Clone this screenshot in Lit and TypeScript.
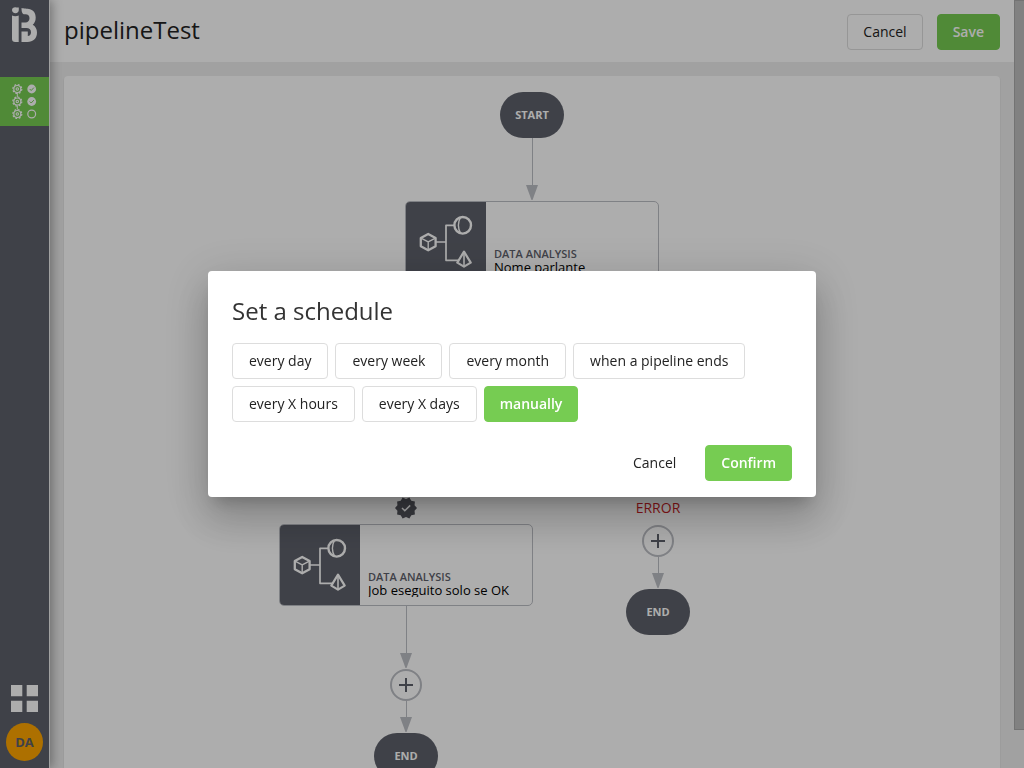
import { LitElement, html, css, svg } from "lit";
import { customElement, property, state } from "lit/decorators.js";
import { classMap } from "lit/directives/class-map.js";

const buttonStyles = css`
  button {
    height: 36px;
    padding: 0 15px;
    border: 1px solid #ddd;
    border-radius: 4px;
    background: #fff;
    color: #222;
    font: 400 14px/20px "Open Sans", sans-serif;
    white-space: nowrap;
    cursor: pointer;
  }
  button.primary {
    border-color: #76cc52;
    background: #76cc52;
    color: #fff;
    font-weight: 600;
  }
  button.plain {
    border-color: transparent;
    background: transparent;
  }
`;

@customElement("flow-arrow")
class FlowArrow extends LitElement {
  static styles = css`
    :host {
      display: flex;
      flex-direction: column;
      align-items: center;
    }
    .line {
      flex: 1;
      width: 1px;
      background: #bcbec4;
    }
    svg {
      display: block;
      fill: #bcbec4;
    }
  `;
  render() {
    return html`<div class="line"></div>
      <svg width="12" height="16" viewBox="0 0 12 16" aria-hidden="true"><path d="M0 0h12L6.500 15h-1z" /></svg>`;
  }
}

@customElement("job-card")
class JobCard extends LitElement {
  @property() kind = "";
  @property() name = "";
  static styles = css`
    :host {
      display: flex;
      box-sizing: border-box;
      width: 254px;
      height: 82px;
      border: 1px solid #bcbec4;
      border-radius: 5px;
      overflow: hidden;
      background: #fff;
    }
    .icon {
      flex: none;
      width: 80px;
      height: 80px;
      background: #5e616b;
    }
    .text {
      flex: 1;
      display: flex;
      flex-direction: column;
      justify-content: flex-end;
      padding: 0 8px 8px;
    }
    .kind {
      color: #5e616b;
      font: 600 11px/14px "Open Sans", sans-serif;
    }
    .name {
      overflow: hidden;
      color: #000;
      font: 400 13px/13px "Open Sans", sans-serif;
    }
  `;
  render() {
    return html`
      <svg class="icon" viewBox="0 0 80 80" fill="none" stroke="#fff" stroke-linejoin="round" aria-hidden="true">
        <path stroke-width="1.700" d="M30 40h10M48 23.300h-8v35h12" />
        <path stroke-width="2.300" d="M22.200 31.900l7.400 4.100v8.200l-7.400 4.100-7.400-4.100v-8.200z" />
        <path stroke-width="1.400" d="M15 36.200l7.200 3.600 7.200-3.600M22.200 39.800v8.400" />
        <circle stroke-width="2.400" cx="56.700" cy="23.300" r="8.300" />
        <path stroke-width="1.400" d="M54.500 15.500c-2.800 4.600-2.800 11 0 15.600" />
        <path stroke-width="2.200" d="M58 49.600l6.700 11-6.700 4-6.700-4z" />
        <path stroke-width="1.600" d="M58 49.600v15" />
      </svg>
      <div class="text">
        <div class="kind">${this.kind}</div>
        <div class="name">${this.name}</div>
      </div>
    `;
  }
}

@customElement("pipeline-canvas")
class PipelineCanvas extends LitElement {
  static styles = css`
    :host {
      display: flex;
      flex-direction: column;
      align-items: center;
      padding: 16px 16px 60px;
      border-radius: 4px;
      background: #fff;
      box-shadow: 0 1px 2px rgba(0, 0, 0, 0.12);
    }
    .terminal {
      display: flex;
      align-items: center;
      justify-content: center;
      width: 64px;
      height: 46px;
      border-radius: 23px;
      background: #5e616b;
      color: #fff;
      font: 700 11px/16px "Open Sans", sans-serif;
    }
    .long {
      height: 63px;
    }
    .short {
      height: 32px;
    }
    .branches {
      display: grid;
      grid-template-columns: 252px 252px;
      justify-items: center;
    }
    .branch {
      display: flex;
      flex-direction: column;
      align-items: center;
    }
    .stem {
      width: 1px;
      height: 60px;
      background: #bcbec4;
    }
    .fork {
      width: 252px;
      height: 153px;
      box-sizing: border-box;
      border: 1px solid #bcbec4;
      border-bottom: 0;
    }
    .badge {
      display: block;
      margin-bottom: 4px;
    }
    .error {
      margin: 3px 0 8px;
      color: #c81e26;
      font: 400 14px/18px "Open Sans", sans-serif;
    }
    .add {
      width: 32px;
      height: 32px;
      padding: 0;
      border: 2px solid #bcbec4;
      border-radius: 50%;
      background: #fff;
      cursor: pointer;
    }
    .add svg {
      display: block;
      margin: auto;
    }
  `;

  private addButton() {
    return html`<button class="add" aria-label="Add job">
      <svg width="14" height="14" viewBox="0 0 14 14" stroke="#5e616b" stroke-width="2"><path d="M7 0v14M0 7h14" /></svg>
    </button>`;
  }

  render() {
    return html`
      <div class="terminal">START</div>
      <flow-arrow class="long"></flow-arrow>
      <job-card kind="DATA ANALYSIS" name="Nome parlante"></job-card>
      <div class="stem"></div>
      <div class="fork"></div>
      <div class="branches">
        <div class="branch">
          <svg class="badge" width="24" height="24" viewBox="0 0 24 24" aria-label="Success">
            <path fill="#55565e" d="M23 12l-2.440-2.780.340-3.680-3.610-.820-1.890-3.180L12 3 8.600 1.540 6.710 4.720l-3.610.810.340 3.680L1 12l2.440 2.780-.340 3.690 3.610.820 1.890 3.180L12 21l3.400 1.460 1.890-3.180 3.610-.820-.340-3.680z" />
            <path fill="none" stroke="#fff" stroke-width="1.500" d="M8 12l2.800 2.800 5.400-5.400" />
          </svg>
          <job-card kind="DATA ANALYSIS" name="Job eseguito solo se OK"></job-card>
          <flow-arrow class="long"></flow-arrow>
          ${this.addButton()}
          <flow-arrow class="short"></flow-arrow>
          <div class="terminal">END</div>
        </div>
        <div class="branch">
          <div class="error">ERROR</div>
          ${this.addButton()}
          <flow-arrow class="short"></flow-arrow>
          <div class="terminal">END</div>
        </div>
      </div>
    `;
  }
}

@customElement("app-sidebar")
class AppSidebar extends LitElement {
  static styles = css`
    :host {
      display: flex;
      flex-direction: column;
      flex: none;
      width: 49px;
      z-index: 1;
      background: #5e616b;
      border-right: 1px solid #eee;
      box-shadow: 2px 0 10px rgba(0, 0, 0, 0.35);
    }
    a,
    svg {
      display: block;
    }
    .logo {
      height: 77px;
    }
    .current {
      background: #76cc52;
    }
    .apps {
      margin: auto 0 11px 11px;
    }
    .avatar {
      width: 37px;
      height: 38px;
      margin: 0 6px 7px;
      padding: 0;
      border: 0;
      border-radius: 50%;
      background: #ffa600;
      color: #5e616b;
      font: 700 13px/18px "Open Sans", sans-serif;
    }
  `;
  render() {
    const gear = (y: number) => svg`
      <circle cx="17.300" cy=${y} r="3.500" stroke-width="1.200" />
      <circle cx="17.300" cy=${y} r="4.500" stroke-width="1.200" stroke-dasharray="1.800 1.730" />
      <circle cx="17.300" cy=${y} r="1.200" stroke-width="1.100" />`;
    const done = (y: number) => svg`
      <circle cx="31.700" cy=${y} r="4.400" fill="#fff" stroke="none" />
      <path stroke="#76cc52" d=${`M29.7 ${y}l1.500 1.500 2.700-2.900`} />`;
    return html`
      <a class="logo" href="#" aria-label="Home">
        <svg width="49" height="50" viewBox="0 0 49 50" fill="#fff">
          <path d="M12 10c0-2 1.500-2.800 3.200-2.800 1.200 0 2 .5 3.600.3v2.500c0 2-1.300 3.200-3.300 3.200S12 12 12 10z" />
          <path d="M12 15.500c2 1 4.600 1 6.700 0V42h-3.500c-2 0-3.200-1-3.200-3z" />
          <path d="M21.500 8c4 1.200 14.200-.8 14.200 9.500 0 3.500-1.200 5.700-3 7.200 2.700 1.500 4.300 4.300 4.300 7.800 0 6-4 9.500-9.500 9.500h-6V31.500h6.300V36c2 0 3.200-1.400 3.200-3.700 0-3-2-4.300-4.500-4.300h-5v-5.500h4c2.300 0 4-1.500 4-4.200 0-2.500-1.500-4-4-4h-1c-2 0-3-1.800-3-6.300z" />
        </svg>
      </a>
      <a class="current" href="#pipelines" aria-label="Pipelines">
        <svg width="49" height="49" viewBox="0 0 49 49" fill="none" stroke="#fff">
          ${gear(12)}${gear(24.5)}${gear(37)}
          <path d="M17.300 16v4M17.300 28.500v4" />
          ${done(12)}${done(24.5)}
          <circle cx="31.700" cy="37" r="3.900" stroke-width="1.200" />
        </svg>
      </a>
      <a class="apps" href="#apps" aria-label="Applications">
        <svg width="27" height="27" viewBox="0 0 27 27" fill="#fff">
          <path d="M0 0h11.300v11.300H0zM15.700 0H27v11.300H15.700zM0 15.700h11.300V27H0zM15.700 15.700H27V27H15.700z" />
        </svg>
      </a>
      <button class="avatar" aria-label="Account">DA</button>
    `;
  }
}

@customElement("schedule-dialog")
class ScheduleDialog extends LitElement {
  @state() private selected = "manually";
  private options = [
    "every day",
    "every week",
    "every month",
    "when a pipeline ends",
    "every X hours",
    "every X days",
    "manually",
  ];
  static styles = [
    buttonStyles,
    css`
      :host {
        position: fixed;
        inset: 0;
        z-index: 10;
        display: flex;
        align-items: center;
        justify-content: center;
        background: rgba(0, 0, 0, 0.32);
      }
      section {
        box-sizing: border-box;
        width: 608px;
        max-width: 80vw;
        padding: 24px 24px 16px;
        border-radius: 4px;
        background: #fff;
        box-shadow: 0 11px 15px -7px rgba(0, 0, 0, 0.2), 0 24px 38px 3px rgba(0, 0, 0, 0.14),
          0 9px 46px 8px rgba(0, 0, 0, 0.12);
      }
      h2 {
        margin: 0 0 16px;
        color: #333;
        font: 400 24px/32px "Open Sans", sans-serif;
      }
      .options {
        display: flex;
        flex-wrap: wrap;
        gap: 7px;
      }
      .options button:not(.primary) {
        padding: 0 16px;
      }
      .actions {
        display: flex;
        justify-content: flex-end;
        gap: 13px;
        padding-top: 23px;
      }
    `,
  ];
  render() {
    return html`
      <section role="dialog" aria-modal="true" aria-labelledby="title">
        <h2 id="title">Set a schedule</h2>
        <div class="options">
          ${this.options.map(
            (o) => html`<button
              class=${classMap({ primary: o === this.selected })}
              aria-pressed=${o === this.selected}
              @click=${() => (this.selected = o)}
            >${o}</button>`
          )}
        </div>
        <div class="actions">
          <button class="plain">Cancel</button>
          <button class="primary">Confirm</button>
        </div>
      </section>
    `;
  }
}

@customElement("app-root")
class AppRoot extends LitElement {
  static styles = [
    buttonStyles,
    css`
      :host {
        display: flex;
        height: 100vh;
        overflow: hidden;
        background: #eee;
        font-family: "Open Sans", sans-serif;
      }
      main {
        flex: 1;
        min-width: 0;
        overflow: hidden;
      }
      header {
        display: flex;
        align-items: flex-start;
        gap: 14px;
        padding: 14px 14px 12px;
        background: #fff;
      }
      h1 {
        flex: 1;
        margin: 0;
        color: #222;
        font: 400 24px/32px "Open Sans", sans-serif;
      }
      pipeline-canvas {
        margin: 14px;
      }
      .scrollbar {
        flex: none;
        width: 10px;
      }
      .thumb {
        box-sizing: border-box;
        height: 95%;
        border: 1px solid #aaa;
        border-right: 0;
        background: #bfbfbf;
      }
    `,
  ];
  render() {
    return html`
      <app-sidebar></app-sidebar>
      <main>
        <header>
          <h1>pipelineTest</h1>
          <button>Cancel</button>
          <button class="primary">Save</button>
        </header>
        <pipeline-canvas></pipeline-canvas>
      </main>
      <div class="scrollbar" aria-hidden="true"><div class="thumb"></div></div>
      <schedule-dialog></schedule-dialog>
    `;
  }
}
